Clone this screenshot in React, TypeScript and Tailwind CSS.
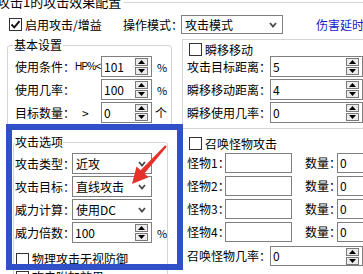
import React from 'react';

const CheckBox = ({ checked = false }: { checked?: boolean }) => (
  <span className="flex h-[13px] w-[13px] shrink-0 items-center justify-center border border-[#333] bg-white">
    {checked && (
      <svg width="11" height="11" viewBox="0 0 11 11">
        <path d="M1.5 5.5 L4.3 8.3 L9.5 2.2" fill="none" stroke="#111" strokeWidth="1.9" />
      </svg>
    )}
  </span>
);

const Spin = () => (
  <span className="ml-auto mr-[3px] flex w-[13px] shrink-0 flex-col gap-[1px]">
    <span className="flex h-[8px] items-center justify-center border border-[#7a7a7a] bg-[#ececec]">
      <svg width="7" height="4" viewBox="0 0 7 4">
        <path d="M0 4 L3.5 0 L7 4Z" fill="#000" />
      </svg>
    </span>
    <span className="flex h-[8px] items-center justify-center border border-[#7a7a7a] bg-[#ececec]">
      <svg width="7" height="4" viewBox="0 0 7 4">
        <path d="M0 0 L3.5 4 L7 0Z" fill="#000" />
      </svg>
    </span>
  </span>
);

const NumBox = ({ value, w }: { value: string; w: string }) => (
  <div className={`flex h-full shrink-0 items-center border border-[#7f7f7f] bg-white pl-[2px] ${w}`}>
    <span>{value}</span>
    <Spin />
  </div>
);

const TextBox = ({ value = '', w }: { value?: string; w: string }) => (
  <div className={`flex h-full shrink-0 items-center border border-[#7f7f7f] bg-white pl-[2px] ${w}`}>
    <span>{value}</span>
  </div>
);

const Select = ({ value, w }: { value: string; w: string }) => (
  <div className={`flex h-full shrink-0 items-center border border-[#7f7f7f] bg-white pl-[3px] pr-[5px] ${w}`}>
    <span className="whitespace-nowrap">{value}</span>
    <svg className="ml-auto" width="8" height="6" viewBox="0 0 8 6">
      <path d="M1 1 L4 4.5 L7 1" fill="none" stroke="#4a4a4a" strokeWidth="1.8" />
    </svg>
  </div>
);

const Label = ({ text, w }: { text: string; w: string }) => (
  <span className={`shrink-0 whitespace-nowrap ${w}`}>{text}</span>
);

export default function App() {
  return (
    <div className="relative h-[274px] w-[363px] overflow-hidden bg-white text-[12px] leading-[14px] text-black font-['Noto_Sans_CJK_SC','Noto_Sans',sans-serif]">
      {/* outer group title */}
      <div className="-mt-[6px] flex h-[16px] items-center">
        <span className="-ml-[3px] shrink-0 whitespace-nowrap text-[13px]">攻击1的攻击效果配置</span>
        <div className="ml-[3px] flex-1 border-t border-[#d4d4d4]" />
      </div>

      {/* enable + mode */}
      <div className="mt-[5px] flex h-[19px] items-center">
        <div className="flex w-[123px] shrink-0 items-center pl-[9px]">
          <CheckBox checked />
          <span className="ml-[3px] whitespace-nowrap">启用攻击/增益</span>
        </div>
        <Label text="操作模式：" w="w-[58px]" />
        <Select value="攻击模式" w="w-[102px]" />
        <span className="ml-[33px] shrink-0 whitespace-nowrap text-[#1a1ac8]">伤害延时</span>
      </div>

      <div className="mt-[4px] flex">
        {/* left column */}
        <div className="w-[182px] shrink-0">
          <fieldset className="ml-[7px] w-[165px] rounded-[3px] border border-[#d4d4d4] pb-[4px] pl-[7px] pt-[4px]">
            <legend className="-ml-[2px] px-[1px] leading-[14px]">基本设置</legend>
            <div className="flex flex-col gap-[2px]">
              <div className="flex h-[21px] items-center">
                <Label text="使用条件：" w="w-[60px]" />
                <span className="w-[26px] shrink-0 whitespace-nowrap text-[10px] tracking-[-0.8px] font-['Liberation_Sans',sans-serif]">HP%&lt;</span>
                <NumBox value="101" w="w-[51px]" />
                <span className="ml-[5px] text-[11px]">%</span>
              </div>
              <div className="flex h-[21px] items-center">
                <Label text="使用几率：" w="w-[86px]" />
                <NumBox value="100" w="w-[51px]" />
                <span className="ml-[5px] text-[11px]">%</span>
              </div>
              <div className="flex h-[21px] items-center">
                <Label text="目标数量：" w="w-[60px]" />
                <span className="w-[26px] shrink-0 pl-[7px]">&gt;</span>
                <NumBox value="0" w="w-[51px]" />
                <span className="ml-[3px]">个</span>
              </div>
            </div>
          </fieldset>

          <fieldset className="ml-[13px] mt-[7px] w-[155px] rounded-[3px] border border-[#d4d4d4] pl-[1px] pt-[4px]">
            <legend className="px-0 leading-[14px]">攻击选项</legend>
            <div className="flex flex-col gap-[2px]">
              <div className="flex h-[21px] items-center">
                <Label text="攻击类型：" w="w-[57px]" />
                <Select value="近攻" w="w-[80px]" />
              </div>
              <div className="flex h-[21px] items-center">
                <Label text="攻击目标：" w="w-[57px]" />
                <Select value="直线攻击" w="w-[80px]" />
              </div>
              <div className="flex h-[21px] items-center">
                <Label text="威力计算：" w="w-[57px]" />
                <Select value="使用DC" w="w-[80px]" />
              </div>
              <div className="flex h-[21px] items-center">
                <Label text="威力倍数：" w="w-[57px]" />
                <NumBox value="100" w="w-[80px]" />
                <span className="ml-[5px] text-[11px]">%</span>
              </div>
            </div>
            <div className="ml-[1px] mt-[9px] flex h-[14px] items-center">
              <CheckBox />
              <span className="ml-[3px] whitespace-nowrap">物理攻击无视防御</span>
            </div>
            <div className="ml-[1px] mt-[4px] flex h-[14px] items-center">
              <CheckBox />
              <span className="ml-[3px] whitespace-nowrap">攻击附加效果</span>
            </div>
          </fieldset>
        </div>

        {/* right column */}
        <div className="min-w-0 flex-1">
          <div className="mt-[1px] border-l border-t border-[#d4d4d4] pb-[5px]">
            <div className="mt-[3px] flex h-[13px] items-center pl-[6px]">
              <CheckBox />
              <span className="ml-[3px] whitespace-nowrap">瞬移移动</span>
            </div>
            <div className="flex flex-col gap-[2px] pl-[4px]">
              <div className="flex h-[21px] items-center">
                <Label text="攻击目标距离：" w="w-[83px]" />
                <NumBox value="5" w="w-[93px]" />
              </div>
              <div className="flex h-[21px] items-center">
                <Label text="瞬移移动距离：" w="w-[83px]" />
                <NumBox value="4" w="w-[93px]" />
              </div>
              <div className="flex h-[21px] items-center">
                <Label text="瞬移使用几率：" w="w-[83px]" />
                <NumBox value="0" w="w-[93px]" />
              </div>
            </div>
          </div>

          <div className="border-l border-t border-[#d4d4d4]">
            <div className="mt-[8px] flex h-[13px] items-center pl-[6px]">
              <CheckBox />
              <span className="ml-[3px] whitespace-nowrap">召唤怪物攻击</span>
            </div>
            <div className="mt-[3px] flex flex-col gap-[3px] pl-[4px]">
              {['怪物1：', '怪物2：', '怪物3：', '怪物4：'].map((m) => (
                <div key={m} className="flex h-[20px] items-center">
                  <Label text={m} w="w-[38px]" />
                  <TextBox w="w-[67px]" />
                  <Label text="数量：" w="ml-[13px] w-[32px]" />
                  <TextBox value="0" w="w-[30px]" />
                </div>
              ))}
              <div className="mt-[1px] flex h-[20px] items-center">
                <Label text="召唤怪物几率：" w="w-[83px]" />
                <NumBox value="0" w="w-[93px]" />
              </div>
            </div>
          </div>
        </div>
      </div>

      {/* highlight box */}
      <div className="pointer-events-none absolute left-[6px] top-[124px] h-[146px] w-[177px] border-[6px] border-[#3050c8]" />

      {/* red arrow */}
      <svg className="pointer-events-none absolute left-0 top-0" width="363" height="274" viewBox="0 0 363 274">
        <polygon
          points="132,184 136.5,166.5 140.6,170.2 165.2,145.3 166.8,146.7 144.4,173.6 148.6,177.2"
          fill="#e5322a"
        />
      </svg>
    </div>
  );
}
